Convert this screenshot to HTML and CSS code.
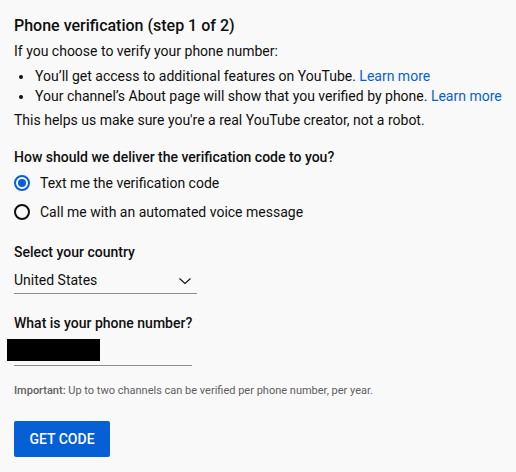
FILE: index.html
```html
<!DOCTYPE html>
<html lang="en">
<head>
<meta charset="utf-8">
<title>Phone verification</title>
<link rel="stylesheet" href="styles.css">
</head>
<body>
<main class="page">
  <h1 class="title">Phone verification (step 1 of 2)</h1>
  <p class="text intro">If you choose to verify your phone number:</p>
  <ul class="bullets">
    <li>You’ll get access to additional features on YouTube. <a class="link" href="#">Learn more</a></li>
    <li>Your channel’s About page will show that you verified by phone. <a class="link" href="#">Learn more</a></li>
  </ul>
  <p class="text helps">This helps us make sure you're a real YouTube creator, not a robot.</p>

  <h2 class="label label-deliver">How should we deliver the verification code to you?</h2>
  <div class="radios">
    <label class="radio-row">
      <span class="radio radio-on"><span class="radio-dot"></span></span>
      <span class="radio-text">Text me the verification code</span>
    </label>
    <label class="radio-row">
      <span class="radio"></span>
      <span class="radio-text">Call me with an automated voice message</span>
    </label>
  </div>

  <h2 class="label label-country">Select your country</h2>
  <div class="select">
    <span class="select-value">United States</span>
    <svg class="chevron" width="14" height="8" viewBox="0 0 14 8" aria-hidden="true">
      <path d="M1.5 1.5 L7 6.5 L12.5 1.5" fill="none" stroke="#0f0f0f" stroke-width="1.1"/>
    </svg>
  </div>

  <h2 class="label label-phone">What is your phone number?</h2>
  <div class="phone">
    <span class="redact"></span>
  </div>

  <p class="note"><b class="note-strong">Important:</b> Up to two channels can be verified per phone number, per year.</p>

  <button class="btn" type="button">GET CODE</button>
</main>
</body>
</html>
```

FILE: styles.css
```css
html, body {
  margin: 0;
  padding: 0;
  background: #f9f9f9;
}

body {
  font-family: Roboto, "Liberation Sans", Arial, sans-serif;
  color: #0f0f0f;
  width: 516px;
  height: 472px;
  overflow: hidden;
}

.page {
  padding: 14px 14px 0 14px;
}

.title {
  margin: 0;
  font-size: 16px;
  line-height: 24px;
  font-weight: 500;
}

.text {
  margin: 0;
  font-size: 14px;
  line-height: 20px;
}

.intro {
  margin-top: 3px;
}

.bullets {
  margin: 6px 0 0 0;
  padding: 0 0 0 20px;
  font-size: 14px;
  line-height: 19.5px;
}

.bullets li {
  padding-left: 1px;
}

.link {
  color: #065fd4;
  text-decoration: none;
}

.helps {
  margin-top: 4px;
}

.label {
  margin: 0;
  font-size: 14px;
  line-height: 20px;
  font-weight: 500;
}

.label-deliver {
  margin-top: 17px;
}

.radios {
  margin-top: 1px;
  display: flex;
  flex-direction: column;
}

.radio-row {
  display: flex;
  align-items: center;
  gap: 10px;
  height: 29px;
  font-size: 14px;
  line-height: 20px;
}

.radio {
  box-sizing: border-box;
  width: 16px;
  height: 16px;
  border: 2px solid #0f0f0f;
  border-radius: 50%;
  display: flex;
  align-items: center;
  justify-content: center;
}

.radio-on {
  border-color: #065fd4;
}

.radio-dot {
  width: 8px;
  height: 8px;
  border-radius: 50%;
  background: #065fd4;
}

.label-country {
  margin-top: 16px;
}

.select {
  margin-top: 8px;
  width: 183px;
  box-sizing: border-box;
  display: flex;
  align-items: center;
  justify-content: space-between;
  padding: 0 5px 3px 0;
  border-bottom: 1px solid #8a8a8a;
  font-size: 14px;
  line-height: 20px;
}

.chevron {
  display: block;
  margin-top: 2px;
}

.label-phone {
  margin-top: 19px;
}

.phone {
  position: relative;
  margin-top: 2px;
  width: 178px;
  height: 30px;
  border-bottom: 1px solid #8a8a8a;
}

.redact {
  position: absolute;
  left: -7px;
  top: 4px;
  width: 93px;
  height: 22px;
  background: #000;
}

.note {
  margin: 17px 0 0 0;
  font-size: 11px;
  line-height: 16px;
  color: #606060;
}

.note-strong {
  font-weight: 500;
}

.btn {
  margin-top: 22px;
  display: block;
  width: 96px;
  height: 36px;
  border: none;
  border-radius: 2px;
  background: #065fd4;
  color: #fff;
  font-family: Roboto, "Liberation Sans", Arial, sans-serif;
  font-size: 14px;
  font-weight: 500;
  padding: 0;
}
```
